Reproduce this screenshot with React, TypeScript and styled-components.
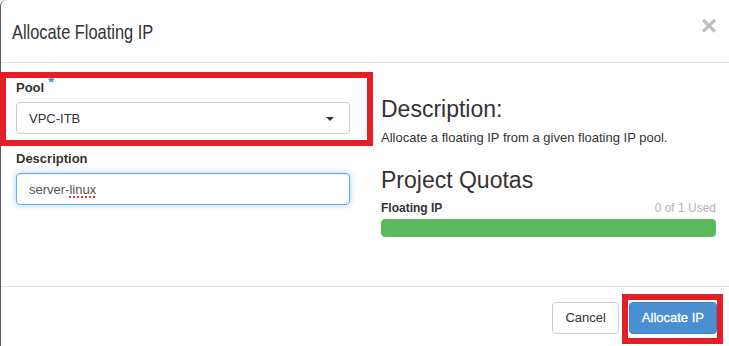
import React from "react";
import styled, { createGlobalStyle } from "styled-components";

const GlobalStyle = createGlobalStyle`
  html, body {
    margin: 0;
    padding: 0;
    background: #ffffff;
    overflow: hidden;
  }
  body {
    font-family: "Liberation Sans", Arial, Helvetica, sans-serif;
    color: #333333;
  }
  * { box-sizing: border-box; }
`;

const Dialog = styled.div`
  position: relative;
  width: 760px;
  height: 346px;
  border-left: 1px solid #5c5c5c;
  border-top-left-radius: 6px;
  background: #fff;
  display: flex;
  flex-direction: column;
`;

const Header = styled.div`
  height: 63px;
  flex: 0 0 63px;
  border-bottom: 1px solid #e5e5e5;
  width: 728px;
  padding: 19px 12px 0 11px;
  display: flex;
  justify-content: space-between;
  align-items: flex-start;
`;

const Title = styled.h4`
  margin: 0;
  font-family: "Liberation Sans", Arial, sans-serif;
  font-weight: 400;
  font-size: 21px;
  line-height: 26px;
  color: #333;
  transform: scaleX(0.78);
  transform-origin: left center;
  white-space: nowrap;
`;

const Close = styled.button`
  border: 0;
  background: none;
  padding: 0;
  margin-top: -9px;
  font-family: "Liberation Sans", Arial, sans-serif;
  font-weight: 700;
  font-size: 28px;
  line-height: 32px;
  color: #bfbfbf;
  cursor: pointer;
`;

const Body = styled.div`
  width: 728px;
  height: 223px;
  flex: 0 0 223px;
  padding: 16px 13px 0 15px;
  display: grid;
  grid-template-columns: 334px 335px;
  column-gap: 31px;
  align-items: start;
`;

const LeftCol = styled.div`
  display: flex;
  flex-direction: column;
`;

const FieldGroup = styled.div<{ $gap?: number }>`
  display: flex;
  flex-direction: column;
  margin-bottom: ${(p) => p.$gap ?? 0}px;
`;

const Label = styled.label`
  font-size: 13px;
  font-weight: 700;
  line-height: 18px;
  color: #333;
  margin-bottom: 5px;
  display: flex;
  align-items: flex-start;
`;

const Required = styled.span`
  color: #3f8fd2;
  font-size: 15px;
  line-height: 12px;
  margin-left: 4px;
  margin-top: -3px;
`;

const SelectBox = styled.div`
  position: relative;
  height: 32px;
  border: 1px solid #cccccc;
  border-radius: 4px;
  background: #fff;
  padding: 0 12px;
  display: flex;
  align-items: center;
  font-size: 13px;
  color: #333;
`;

const Caret = styled.span`
  position: absolute;
  right: 15px;
  top: 14px;
  width: 0;
  height: 0;
  border-left: 4px solid transparent;
  border-right: 4px solid transparent;
  border-top: 4px solid #333;
`;

const TextBox = styled.div`
  height: 32px;
  border: 1px solid #66afe9;
  border-radius: 4px;
  background: #fff;
  padding: 0 12px;
  display: flex;
  align-items: center;
  font-size: 13px;
  color: #555;
  box-shadow: inset 0 1px 1px rgba(0, 0, 0, 0.075), 0 0 6px rgba(102, 175, 233, 0.6);
`;

const Misspelled = styled.span`
  text-decoration: underline dotted #d9363e;
  text-decoration-thickness: 2px;
  text-underline-offset: 3px;
`;

const RightCol = styled.div`
  padding-top: 17px;
  display: flex;
  flex-direction: column;
`;

const Heading = styled.h3<{ $mt?: number }>`
  margin: ${(p) => p.$mt ?? 0}px 0 0 0;
  font-size: 23px;
  font-weight: 400;
  line-height: 26px;
  color: #333;
`;

const Paragraph = styled.p`
  margin: 7px 0 0 0;
  font-size: 13px;
  line-height: 18px;
  color: #333;
`;

const QuotaRow = styled.div`
  margin-top: 7px;
  display: flex;
  justify-content: space-between;
  font-size: 12px;
  line-height: 16px;
`;

const QuotaName = styled.span`
  font-weight: 700;
  color: #333;
`;

const QuotaUsed = styled.span`
  color: #b3b3b3;
`;

const Progress = styled.div`
  margin-top: 3px;
  height: 18px;
  border-radius: 4px;
  background: #f5f5f5;
  overflow: hidden;
  display: flex;
`;

const ProgressFill = styled.div`
  height: 100%;
  background: #5cb85c;
  border-radius: 4px;
`;

const Footer = styled.div`
  width: 728px;
  border-top: 1px solid #e5e5e5;
  padding: 15px 12px 0 0;
  display: flex;
  justify-content: flex-end;
  gap: 10px;
`;

const Button = styled.button<{ $primary?: boolean }>`
  height: 32px;
  padding: 0 12px;
  border-radius: 4px;
  font-family: "Liberation Sans", Arial, sans-serif;
  font-size: 13px;
  line-height: 30px;
  cursor: pointer;
  border: 1px solid ${(p) => (p.$primary ? "#3a80c4" : "#cccccc")};
  background: ${(p) => (p.$primary ? "#4a8fcf" : "#ffffff")};
  color: ${(p) => (p.$primary ? "#ffffff" : "#333333")};
  -webkit-text-stroke: ${(p) => (p.$primary ? "0.3px #ffffff" : "0")};
`;

const Highlight = styled.div<{ $w: number }>`
  position: absolute;
  border: ${(p) => p.$w}px solid #e31e26;
  pointer-events: none;
`;

export default function App() {
  return (
    <>
      <GlobalStyle />
      <Dialog>
        <Header>
          <Title>Allocate Floating IP</Title>
          <Close aria-label="Close">×</Close>
        </Header>
        <Body>
          <LeftCol>
            <FieldGroup $gap={16}>
              <Label>
                Pool<Required>*</Required>
              </Label>
              <SelectBox>
                VPC-ITB
                <Caret />
              </SelectBox>
            </FieldGroup>
            <FieldGroup>
              <Label>Description</Label>
              <TextBox role="textbox">
                server-<Misspelled>linux</Misspelled>
              </TextBox>
            </FieldGroup>
          </LeftCol>
          <RightCol>
            <Heading>Description:</Heading>
            <Paragraph>Allocate a floating IP from a given floating IP pool.</Paragraph>
            <Heading $mt={20}>Project Quotas</Heading>
            <QuotaRow>
              <QuotaName>Floating IP</QuotaName>
              <QuotaUsed>0 of 1 Used</QuotaUsed>
            </QuotaRow>
            <Progress>
              <ProgressFill style={{ width: "100%" }} />
            </Progress>
          </RightCol>
        </Body>
        <Footer>
          <Button>Cancel</Button>
          <Button $primary>Allocate IP</Button>
        </Footer>
        <Highlight $w={6} style={{ left: -1, top: 72, width: 373, height: 74 }} />
        <Highlight $w={6} style={{ left: 621, top: 294, width: 101, height: 50 }} />
      </Dialog>
    </>
  );
}
